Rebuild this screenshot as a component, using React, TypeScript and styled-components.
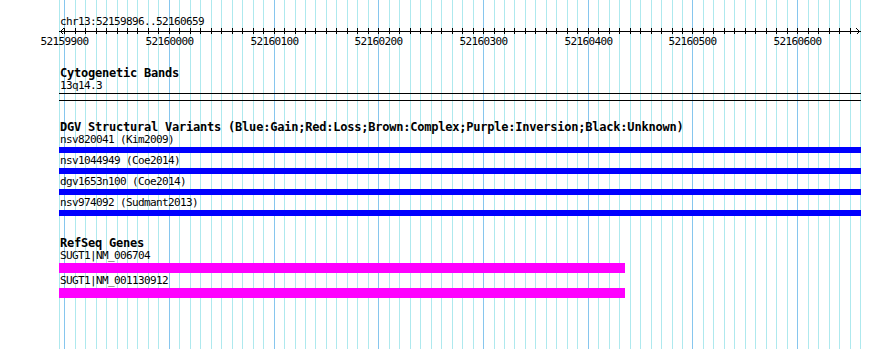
import React from "react";
import styled, { createGlobalStyle } from "styled-components";

const VIEW_START = 52159896;
const VIEW_END = 52160659;
const LEFT = 60;
const PX_PER_BP = 800 / (VIEW_END - VIEW_START + 1);
const toX = (bp: number) => Math.round(LEFT + (bp - VIEW_START) * PX_PER_BP);

const TICKS: number[] = [];
for (let bp = 52159900; bp <= 52160650; bp += 10) TICKS.push(bp);
const MAJORS = TICKS.filter((bp) => bp % 100 === 0);

const FULL_BAR = 802;

interface Feature {
  label: string;
  width: number;
}

const variants: Feature[] = [
  { label: "nsv820041 (Kim2009)", width: FULL_BAR },
  { label: "nsv1044949 (Coe2014)", width: FULL_BAR },
  { label: "dgv1653n100 (Coe2014)", width: FULL_BAR },
  { label: "nsv974092 (Sudmant2013)", width: FULL_BAR },
];

const genes: Feature[] = [
  { label: "SUGT1|NM_006704", width: 566 },
  { label: "SUGT1|NM_001130912", width: 566 },
];

const GlobalStyle = createGlobalStyle`
  html, body {
    margin: 0;
    padding: 0;
    background: #ffffff;
  }
`;

const Page = styled.div`
  position: relative;
  width: 890px;
  height: 349px;
  overflow: hidden;
  background: #ffffff;
  color: #000000;
  font-family: "DejaVu Sans Mono", monospace;
`;

const Grid = styled.svg`
  position: absolute;
  top: 0;
  left: 0;
  z-index: 0;
  shape-rendering: crispEdges;
`;

const Content = styled.div`
  position: relative;
  z-index: 1;
  display: flex;
  flex-direction: column;
`;

const RulerTitle = styled.div`
  margin-top: 15px;
  padding-left: 60px;
  font-size: 11px;
  letter-spacing: -0.62px;
  line-height: 13px;
  white-space: pre;
`;

const Axis = styled.svg`
  display: block;
  shape-rendering: crispEdges;

  text {
    font-family: "DejaVu Sans Mono", monospace;
    font-size: 11px;
    letter-spacing: -0.62px;
  }
`;

const Track = styled.section<{ $top: number }>`
  display: flex;
  flex-direction: column;
  margin-top: ${(p) => p.$top}px;
  padding-left: 59px;
`;

const TrackTitle = styled.div`
  padding-left: 1px;
  font-size: 12px;
  font-weight: bold;
  letter-spacing: -0.22px;
  line-height: 13px;
  white-space: pre;
`;

const FeatureList = styled.div<{ $gap: number }>`
  display: flex;
  flex-direction: column;
  gap: ${(p) => p.$gap}px;
`;

const FeatureRow = styled.div`
  display: flex;
  flex-direction: column;
`;

const Label = styled.div`
  padding: 0 0 2px 1px;
  font-size: 11px;
  letter-spacing: -0.62px;
  line-height: 11px;
  white-space: pre;
`;

const Bar = styled.div<{ $color: string; $height: number }>`
  height: ${(p) => p.$height}px;
  background: ${(p) => p.$color};
`;

const Band = styled.div`
  width: 802px;
  height: 6px;
  border-top: 1px solid #000000;
  border-bottom: 1px solid #000000;
  background: transparent;
`;

const GridLines = () => (
  <Grid width={890} height={349}>
    <rect x={59} y={0} width={1} height={349} fill="#aee9ee" />
    <rect x={860} y={0} width={1} height={349} fill="#aee9ee" />
    {TICKS.map((bp) => (
      <rect
        key={bp}
        x={toX(bp)}
        y={0}
        width={1}
        height={349}
        fill={bp % 100 === 0 ? "#86c6ee" : "#aee9ee"}
      />
    ))}
  </Grid>
);

const Ruler = () => (
  <>
    <RulerTitle>chr13:52159896..52160659</RulerTitle>
    <Axis width={890} height={39}>
      <rect x={59} y={3} width={802} height={1} fill="#000" />
      {TICKS.map((bp) => (
        <rect key={bp} x={toX(bp)} y={0} width={1} height={6} fill="#000" />
      ))}
      <polyline points="63.5,0.5 60.5,3.5 63.5,6.5" fill="none" stroke="#000" strokeWidth={1} />
      <polyline points="856.5,0.5 859.5,3.5 856.5,6.5" fill="none" stroke="#000" strokeWidth={1} />
      {MAJORS.map((bp) => (
        <text key={bp} x={toX(bp) + 0.5} y={17} textAnchor="middle" fill="#000">
          {bp}
        </text>
      ))}
    </Axis>
  </>
);

const FeatureTrack = ({
  title,
  top,
  items,
  color,
  barHeight,
  gap,
}: {
  title: string;
  top: number;
  items: Feature[];
  color: string;
  barHeight: number;
  gap: number;
}) => (
  <Track $top={top}>
    <TrackTitle>{title}</TrackTitle>
    <FeatureList $gap={gap}>
      {items.map((f) => (
        <FeatureRow key={f.label}>
          <Label>{f.label}</Label>
          <Bar $color={color} $height={barHeight} style={{ width: f.width }} />
        </FeatureRow>
      ))}
    </FeatureList>
  </Track>
);

export default function App() {
  return (
    <Page>
      <GlobalStyle />
      <GridLines />
      <Content>
        <Ruler />
        <Track $top={0}>
          <TrackTitle>Cytogenetic Bands</TrackTitle>
          <Label>13q14.3</Label>
          <Band />
        </Track>
        <FeatureTrack
          title="DGV Structural Variants (Blue:Gain;Red:Loss;Brown:Complex;Purple:Inversion;Black:Unknown)"
          top={20}
          items={variants}
          color="#0000ff"
          barHeight={6}
          gap={2}
        />
        <FeatureTrack
          title="RefSeq Genes"
          top={21}
          items={genes}
          color="#ff00ff"
          barHeight={10}
          gap={2}
        />
      </Content>
    </Page>
  );
}
